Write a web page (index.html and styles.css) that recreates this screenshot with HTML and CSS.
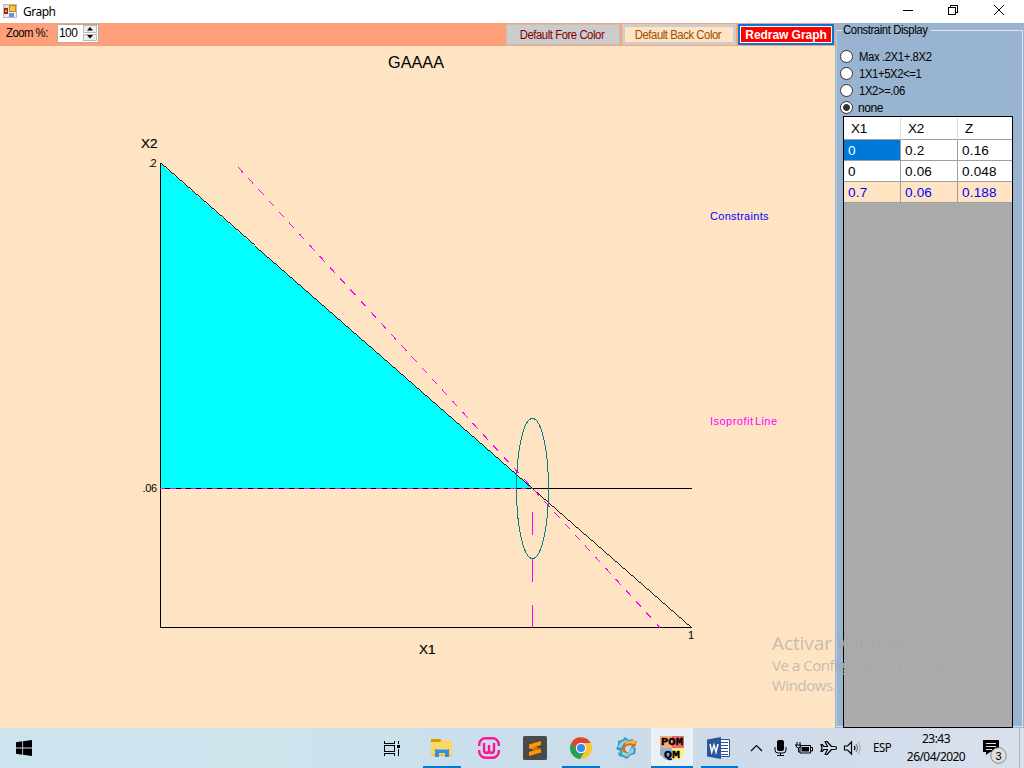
FILE: index.html
```html
<!DOCTYPE html>
<html lang="es">
<head>
<meta charset="utf-8">
<title>Graph</title>
<link rel="stylesheet" href="styles.css">
</head>
<body>
<div class="desktop">
  <header class="titlebar">
    <svg class="app-icon" width="14" height="14" viewBox="0 0 14 14"><path fill="#bbb" d="M0 0h14v14H0z"/><path fill="#eee" d="M1 1h12v12H1z"/><path fill="#ddd" d="M1 1h5v3H1z"/><rect x="1" y="4" width="4" height="6" fill="#b51b16"/><rect x="2" y="6" width="2" height="2" fill="#f28a70"/><rect x="6.500" y="1.500" width="6" height="6" fill="#f5c73b" stroke="#c48a16"/><rect x="6" y="9" width="5" height="4" fill="#5c94e6"/></svg>
    <span class="app-name">Graph</span>
    <svg class="win-controls" width="112" height="22" viewBox="0 0 112 22" fill="none" stroke="#000"><path d="M3 10.500h10M48.500 7.500h7v7h-7zM50.500 7V5.500h7v7H56" shape-rendering="crispEdges"/><path d="M94 5l10 10m0-10L94 15"/></svg>
  </header>
  <main class="window">
    <section class="graph-pane">
      <div class="toolbar">
        <label class="zoom-label"><span class="narrow">Zoom %:</span></label>
        <div class="spinner"><span class="spin-value">100</span><div class="spin-buttons"><i><svg width="6" height="4"><path d="M0 3.500L3 0l3 3.500z"/></svg></i><i><svg width="6" height="4"><path d="M0 0l3 3.500L6 0z"/></svg></i></div></div>
        <div class="tools"><button class="btn fore"><span class="narrow mid">Default Fore Color</span></button><button class="btn back"><span class="narrow mid">Default Back Color</span></button><button class="btn redraw"><span>Redraw Graph</span></button></div>
      </div>
      <svg class="chart" width="835" height="682" viewBox="0 46 835 682">
        <path d="M160.500 163.500L532.500 488.500H160.500z" fill="#0ff" shape-rendering="crispEdges"/>
        <g fill="none" shape-rendering="crispEdges">
          <path stroke="#000" d="M160.500 163V627.500H692M160.500 488.500H692"/>
          <path stroke="#000" stroke-width=".9" d="M160.500 163.500L691.500 627.500"/>
          <path stroke="#f0f" stroke-dasharray="5.400 4.900" d="M160 488.500H533"/>
          <path stroke="#f0f" stroke-dasharray="7.500 7.610" d="M238 167L660 627.500"/>
          <path stroke="#f0f" stroke-dasharray="23 23.500" d="M532.500 628V489"/>
          <ellipse cx="532.500" cy="488.500" rx="16" ry="70" stroke="#008080"/>
        </g>
        <text x="388" y="68" class="t-title" textLength="56" lengthAdjust="spacingAndGlyphs">GAAAA</text>
        <text x="141" y="148" class="t-axis" textLength="16.500" lengthAdjust="spacingAndGlyphs">X2</text>
        <text x="419" y="654" class="t-axis" textLength="16.500" lengthAdjust="spacingAndGlyphs">X1</text>
        <text x="148.500" y="167" class="t-tick" textLength="8">.2</text>
        <text x="142.500" y="492" class="t-tick" textLength="14.500">.06</text>
        <text x="688" y="639" class="t-tick">1</text>
        <text x="710" y="220" class="t-key blue" textLength="58.500">Constraints</text>
        <text x="710" y="425" class="t-key pink" textLength="43">Isoprofit</text>
        <text x="755" y="425" class="t-key pink" textLength="22">Line</text>
      </svg>
    </section>
    <aside class="side">
      <fieldset class="group">
        <legend><span class="narrow">Constraint Display</span></legend>
        <div class="options">
          <label class="opt"><i class="radio"></i><span class="narrow">Max .2X1+.8X2</span></label>
          <label class="opt"><i class="radio"></i><span class="narrow">1X1+5X2&lt;=1</span></label>
          <label class="opt"><i class="radio"></i><span class="narrow">1X2&gt;=.06</span></label>
          <label class="opt none"><i class="radio on"></i><span>none</span></label>
        </div>
        <div class="grid">
          <div class="row head"><b>X1</b><b>X2</b><b>Z</b></div>
          <div class="row"><b class="sel">0</b><b>0.2</b><b>0.16</b></div>
          <div class="row"><b>0</b><b>0.06</b><b>0.048</b></div>
          <div class="row best"><b>0.7</b><b>0.06</b><b>0.188</b></div>
        </div>
      </fieldset>
    </aside>
  </main>
  <div class="watermark"><p class="wm-big">Activar <span class="faint">Windows</span></p><p>Ve a Conf<span class="faint">iguración para activar</span></p><p>Windows.</p></div>
  <footer class="taskbar">
    <div class="start"><svg width="16" height="16" viewBox="0 0 16 16"><path d="M0 2.200L6.300 1.300v6.200H0zM7.100 1.200L16 0v7.500H7.100zM0 8.400h6.300v6.300L0 13.800zM7.100 8.400H16V16l-8.900-1.200z"/></svg></div>
    <nav class="apps">
      <div class="task view"><svg width="16" height="15" viewBox="0 0 16 15" fill="none" stroke="#000" shape-rendering="crispEdges"><path d="M.5 0v2.500h10V0M.5 4.500h10v6H.5zM.5 15v-2.500h10V15M14.500 0v3M14.500 8v7"/><path fill="#000" stroke="none" d="M13 4h3v3h-3z"/></svg></div>
      <div class="task run"><svg width="22" height="20" viewBox="0 0 22 20"><path fill="#d79b00" d="M0 1h9l2 2-2 2H0z"/><path fill="#ffd764" d="M0 4h9l2-2h10v16H0z"/><path fill="#f2c34c" d="M0 16h21v2H0z"/><path fill="#398fd6" d="M4 11h14v8h-4v-4H8v4H4z"/><path fill="#75bff0" d="M5 11h12v1H5z"/></svg></div>
      <div class="task wamp"><svg width="22" height="22" viewBox="0 0 22 22" fill="none" stroke="#ff1493" stroke-width="2.400"><path d="M1.200 9V7.500A6.300 6.300 0 017.500 1.200h7A6.300 6.300 0 0120.800 7.500V9M1.200 13v1.500A6.300 6.300 0 007.500 20.800h7a6.300 6.300 0 006.300-6.300V13"/><path stroke-width="2.400" d="M6 6v7q0 3 2.500 3T11 13V8v5q0 3 2.500 3T16 13V6"/></svg></div>
      <div class="task sub"><svg width="24" height="24" viewBox="0 0 24 24"><rect width="24" height="24" rx="1.500" fill="#4a4a4a"/><path fill="#ff9800" d="M6 8.500L18 5v4l-6 2 6 1.700v3.800L6 20v-4l6-2-6-1.800z"/><path fill="#d96d00" d="M12 11l6 1.700v1.300l-6 0-3-1z"/></svg></div>
      <div class="task run"><svg width="22" height="22" viewBox="0 0 22 22"><circle cx="11" cy="11" r="11" fill="#fbc72e"/><path fill="#df4334" d="M1.500 5.500A11 11 0 0120.600 6H11l-4.300 7.500z"/><path fill="#20a05a" d="M1.500 5.500L7 14l8 0-5 8A11 11 0 011.500 5.500z"/><circle cx="11" cy="11" r="5.200" fill="#fff"/><circle cx="11" cy="11" r="4.100" fill="#4285f4"/></svg></div>
      <div class="task"><svg width="22" height="22" viewBox="0 0 22 22"><path fill="#3998c6" d="M9 0l4 3 4-1 1 4 2 3-5-1-6 1-3 4 2 6-3-1-1-4-4-2 2-4 0-4 4-1z"/><path fill="#3998c6" d="M16 8l4 4-1 5-4 1-4 4-4-2-4-1-1-4 5 2 6-2z"/><path fill="#8ad3e6" d="M4 6l5-3 4 1-5 2-3 5-3-1zM16 10l2 3-1 3-3 1-3 3-4-2-2-2 4 0 5-2z"/><path fill="#d96d16" d="M9 6q5-3 9-2l3 0-2 6-5-2q-4 0-5 3 0 4 4 5-7 1-7-5 0-3 3-5z"/><path fill="#ffb536" d="M10 5l8-2 2 2-1 2q-7-2-10 1z"/></svg></div>
      <div class="task active run"><svg width="26" height="28" viewBox="-1 -2 26 28"><path fill="#f6ad78" d="M0 0h12v12H0z"/><path fill="#ef6a67" d="M12 0h12v12H12z"/><path fill="#90b3df" d="M0 12h12v12H6L0 19z"/><path fill="#fff27e" d="M12 12h12v7l-5 5h-7z"/><g class="pom"><text x="1" y="9" textLength="22" lengthAdjust="spacingAndGlyphs">POM</text><text x="4" y="21.500" textLength="16" lengthAdjust="spacingAndGlyphs">QM</text></g></svg></div>
      <div class="task run word"><svg width="24" height="22" viewBox="0 0 24 22"><path fill="#fff" stroke="#2b579a" d="M12.500 2.500h10v17h-10z"/><path stroke="#2b579a" d="M14 5.500h7M14 8.500h7M14 11.500h7M14 14.500h7M14 17.500h7"/><path fill="#2b579a" d="M0 2.500L14 0v22L0 19.500z"/><path d="M3 7l1.800 8L7 8l2 7 2-8" fill="none" stroke="#fff" stroke-width="1.500"/></svg></div>
    </nav>
    <div class="tray">
      <svg class="tray-icons" width="116" height="18" viewBox="0 0 116 18" fill="none" stroke="#000" stroke-width="1.200">
        <path d="M1 12l5.500-5.500L12 12"/>
        <rect x="27" y="1" width="7" height="11" rx="2" fill="#000" stroke="none"/><path d="M25 8v3q0 3 3 3h5q3 0 3-3V8M30.500 14v3M27 16.500h7" stroke-width="1"/>
        <path d="M50 6.500h10.500v7.500H50zM61 8.500h1.500v3.500H61M47 3v3M50 3v3M45 6h6M46 6q0 3 2.500 3T51 6M48.500 9v4H50" stroke-width="1"/><path fill="#000" stroke="none" d="M51.500 8h7.500v4.500h-7.500z"/>
        <path stroke-linejoin="round" d="M74 7.500H77.500L75 2.500H77L81.500 7.500H85Q86.500 7.500 86.500 9T85 10.500H81.500L77 15.500H75L77.500 10.500H74L72 12.500H71L72 9L71 5.500H72z"/>
        <path d="M94.500 7h3l4-4v12l-4-4h-3z"/><path d="M104 7q2 2 0 4"/><path stroke="#777" d="M106 5q3 4 0 8"/><path stroke="#aaa" d="M108 3q4.500 6 0 12"/>
      </svg>
      <span class="lang">ESP</span>
      <div class="clock"><span>23:43</span><span>26/04/2020</span></div>
      <svg class="note" width="26" height="26" viewBox="0 0 26 26"><path d="M1 1h16v12H8l-4 3v-3H1z"/><path stroke="#dce2ee" d="M4 4.500h10M4 7.500h10M4 10.500h6"/><circle cx="16.500" cy="16.500" r="7.800" fill="#dedede" stroke="#888"/><text x="13.500" y="20.500" class="badge">3</text></svg>
    </div>
    <div class="peek"></div>
  </footer>
</div>
</body>
</html>
```
FILE: styles.css
```css
* { box-sizing: border-box; }
body { margin: 0; font-family: "Liberation Sans", Arial, sans-serif; color: #000; }
svg { display: block; flex: none; }
.desktop { position: relative; width: 1024px; height: 768px; display: flex; flex-direction: column; overflow: hidden; }
.titlebar { height: 23px; background: #fff; display: flex; align-items: center; padding: 0 12px 1px 3px; }
.app-name { margin: 2px 0 0 6px; font: 12px "Noto Sans", sans-serif; letter-spacing: -.5px; line-height: 20px; }
.win-controls { margin-left: auto; }
.window { height: 705px; display: flex; }
.graph-pane { width: 835px; background: #ffe4c4; }
.toolbar { height: 23px; display: flex; background: #ffa07a; padding-left: 6px; }
.narrow { display: inline-block; transform: scaleX(.94); transform-origin: left; }
.narrow.mid { transform-origin: center; }
.zoom-label { width: 51px; font-size: 12px; line-height: 20px; letter-spacing: -.5px; white-space: nowrap; }
.spinner { width: 42px; height: 19px; margin-top: 1px; border: 1px solid #abadb3; background: #fff; display: flex; justify-content: space-between; }
.spin-value { font-size: 12px; line-height: 17px; padding-left: 1px; letter-spacing: -.6px; }
.spin-buttons { width: 15px; display: flex; flex-direction: column; gap: 1px; padding: 0 1px 1px 0; }
.spin-buttons i { flex: 1; display: flex; align-items: center; justify-content: center; background: #eee; border: 1px solid #bbb; }
.tools { margin-left: auto; display: flex; gap: 2px; padding: 1px 1px 0 0; }
.btn { height: 21px; padding: 0; border: 2px solid #ccc; font: 12px/16px "Liberation Sans", sans-serif; white-space: nowrap; letter-spacing: -.45px; border-radius: 0; }
.fore { width: 114px; background: #ccc; color: #800000; border: 1px solid #c0c0c0; }
.back { width: 114px; background: #ffe4c4; color: #994c00; border-width: 3px; line-height: 14px; }
.redraw { width: 96px; background: #f00; color: #fff; border-color: #0078d7; box-shadow: inset 0 0 0 1px #fff; font-weight: bold; letter-spacing: -.05px; }
.fore span, .back span { margin-left: -2px; }
.t-title { font-size: 16px; }
.t-axis { font-size: 13.5px; stroke: #000; stroke-width: .2px; }
.t-tick { font-size: 11px; }
.t-key { font-size: 11px; }
.blue { fill: #00f; }
.pink { fill: #f0f; }
.side { width: 189px; background: #99b4d1; padding: 0 1px 0; }
.group { margin: 0; padding: 0 10px 0 3px; height: 704px; min-width: 0; border: 1px solid #dce2e8; border-left-color: #b8cadd; }
.group legend { width: 89px; padding: 0 1px; margin-left: 2px; font-size: 12px; line-height: 14px; letter-spacing: -.42px; white-space: nowrap; }
.options { display: flex; flex-direction: column; height: 79px; padding-top: 11px; }
.opt { height: 17px; display: flex; align-items: center; gap: 6px; font-size: 12px; line-height: 17px; letter-spacing: -.4px; white-space: nowrap; }
.opt span { padding-top: 1px; }
.opt.none { gap: 5px; }
.radio { width: 13px; height: 13px; border: 1px solid #333; border-radius: 50%; background: #fff; flex: none; }
.radio.on { background: radial-gradient(circle, #333 0 3px, #fff 3.8px); }
.grid { width: 170px; height: 612px; margin-left: 3px; border: 1px solid #000; background: #ababab; }
.row { height: 21px; display: grid; grid-template-columns: 57px 57px 54px; background: #fff; }
.row b { border-right: 1px solid #a0a0a0; border-bottom: 1px solid #a0a0a0; font-weight: normal; font-size: 13.5px; line-height: 22px; padding-left: 4px; letter-spacing: .2px; height: 21px; }
.row b:last-child { border-right: 0; }
.row.head { height: 23px; }
.row.head b { height: 23px; padding-left: 7px; border-right-color: #ddd; line-height: 23px; letter-spacing: -.2px; }
.row .sel { background: #0078d7; color: #fff; }
.row.best { background: #ffe4c4; color: #00f; }
.watermark { position: absolute; left: 772px; top: 631px; font: 15px/20px "Open Sans", "Noto Sans", sans-serif; color: #c7bbad; white-space: nowrap; letter-spacing: -.45px; }
.watermark p { margin: 0; }
.watermark .wm-big { font-size: 19px; line-height: 24px; letter-spacing: -.1px; }
.faint { color: #a8a8a9; }
.taskbar { height: 40px; display: flex; background: linear-gradient(90deg, #cce4ee, #cde4ed 25%, #cadfeb 45%, #ccdae9 70%, #d9e0ed); }
.start { width: 371px; padding: 12px 0 0 16px; }
.apps { display: flex; width: 367px; }
.task { width: 46px; display: flex; align-items: center; justify-content: center; margin-right: .3px; }
.wamp, .sub { padding-left: 2px; }
.task.view { width: 42px; margin-right: 6px; }
.run { border-bottom: 2px solid #0078d7; padding-top: 2px; width: 38px; margin: 0 4px; }
.task.active { width: 42px; background: #e9f1f7; margin: 0 1px; padding-left: 1px; }
.word { margin-left: 7px; width: 37px; margin-right: 0; }
.tray { width: 282px; display: flex; padding-left: 12px; }
.tray-icons { margin-top: 11px; }
.lang { margin: 11px 0 0 7px; font: 12.5px/18px "Noto Sans", sans-serif; width: 28px; letter-spacing: -.5px; transform: scaleX(.92); transform-origin: left; }
.clock { width: 68px; display: flex; flex-direction: column; align-items: center; font: 12px/18px "Noto Sans", sans-serif; padding-top: 2px; letter-spacing: -.55px; margin-left: 1px; }
.note { margin: 11px 0 0 12px; }
.badge { font-size: 11px; }
.peek { width: 4px; border-left: 1px solid #a9b2c0; margin-left: -1px; }
.pom { font: bold 11px/1 "Liberation Mono", monospace; stroke: #000; stroke-width: .3px; }
```
